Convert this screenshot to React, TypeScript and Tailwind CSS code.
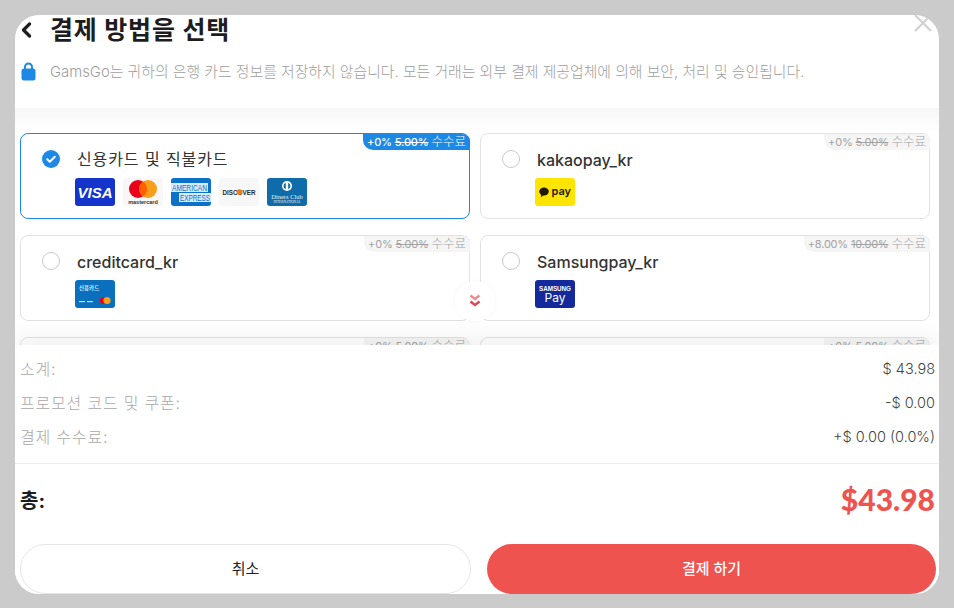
import { ReactNode } from 'react'

const FONT = "font-['Inter','Noto_Sans_CJK_KR',sans-serif]"

function Tile({ className, children }: { className: string; children: ReactNode }) {
  return <div className={`w-10 h-7 rounded-[3px] overflow-hidden shrink-0 ${className}`}>{children}</div>
}

function Visa() {
  return (
    <Tile className="bg-[#1434cb] flex items-center justify-center">
      <span className="text-white text-[15px] leading-none font-black italic font-['Liberation_Sans',sans-serif]">VISA</span>
    </Tile>
  )
}

function Mastercard() {
  return (
    <Tile className="bg-[#f7f7f7]">
      <svg width="40" height="28" viewBox="0 0 40 28">
        <circle cx="15" cy="11" r="9" fill="#eb001b" />
        <circle cx="25" cy="11" r="9" fill="#f79e1b" />
        <path d="M20 3.5a9 9 0 0 1 0 15a9 9 0 0 1 0-15z" fill="#ff5f00" />
        <text x="20" y="25.5" textAnchor="middle" fontSize="5.5" fontWeight="700" fill="#333" fontFamily="Liberation Sans">mastercard</text>
      </svg>
    </Tile>
  )
}

function Amex() {
  return (
    <Tile className="bg-[#0b72c8]">
      <svg width="40" height="28" viewBox="0 0 40 28">
        <rect x="0" y="5" width="37" height="9" fill="#d8eafa" />
        <rect x="8" y="15" width="32" height="9" fill="#d8eafa" />
        <text x="1" y="12.5" fontSize="8.5" textLength="35" lengthAdjust="spacingAndGlyphs" fill="#0b72c8" fontFamily="Liberation Sans">AMERICAN</text>
        <text x="9" y="22.5" fontSize="8.5" textLength="30" lengthAdjust="spacingAndGlyphs" fill="#0b72c8" fontFamily="Liberation Sans">EXPRESS</text>
      </svg>
    </Tile>
  )
}

function Discover() {
  return (
    <Tile className="bg-[#f7f7f7]">
      <svg width="40" height="28" viewBox="0 0 40 28">
        <text x="3.5" y="16.5" fontSize="7.5" fontWeight="700" textLength="33" lengthAdjust="spacingAndGlyphs" fill="#2b2b2b" fontFamily="Liberation Sans">DISCOVER</text>
        <circle cx="20.5" cy="14" r="2.8" fill="#f27a1a" />
      </svg>
    </Tile>
  )
}

function Diners() {
  return (
    <Tile className="bg-[#0f6ca8]">
      <svg width="40" height="28" viewBox="0 0 40 28">
        <circle cx="20" cy="8" r="5" fill="#fff" />
        <path d="M18.8 4.8a3.4 3.4 0 0 0 0 6.4zM21.2 4.8a3.4 3.4 0 0 1 0 6.4z" fill="#0f6ca8" />
        <text x="20" y="20.5" textAnchor="middle" fontSize="6.5" fill="#e4f0f8" fontFamily="Liberation Serif">Diners Club</text>
        <text x="20" y="25" textAnchor="middle" fontSize="3.4" fill="#e4f0f8" fontFamily="Liberation Serif">INTERNATIONAL</text>
      </svg>
    </Tile>
  )
}

function KakaoPay() {
  return (
    <Tile className="bg-[#fee500]">
      <svg width="40" height="28" viewBox="0 0 40 28">
        <ellipse cx="9" cy="13.5" rx="4.8" ry="4" fill="#1e1a00" />
        <path d="M6.5 16l-.8 3.2 3.2-2.2z" fill="#1e1a00" />
        <text x="16.5" y="16.5" fontSize="11" fontWeight="600" fill="#1e1a00" fontFamily="Inter">pay</text>
      </svg>
    </Tile>
  )
}

function LocalCard() {
  return (
    <Tile className="bg-[#0a70bd]">
      <svg width="40" height="28" viewBox="0 0 40 28">
        <text x="4" y="9.5" fontSize="5.5" fontWeight="700" fill="#cfe6f7" fontFamily="Noto Sans CJK KR">신용카드</text>
        <rect x="4" y="21" width="6" height="1.2" fill="#bcdcf3" />
        <rect x="12" y="21" width="6" height="1.2" fill="#bcdcf3" />
        <circle cx="28.5" cy="20.5" r="3.6" fill="#eb001b" />
        <circle cx="32" cy="20.5" r="3.6" fill="#f79e1b" />
      </svg>
    </Tile>
  )
}

function SamsungPay() {
  return (
    <Tile className="bg-[#14299b]">
      <svg width="40" height="28" viewBox="0 0 40 28">
        <text x="4" y="11" fontSize="7.5" fontWeight="700" textLength="32" lengthAdjust="spacingAndGlyphs" fill="#fff" fontFamily="Liberation Sans">SAMSUNG</text>
        <text x="20" y="22" textAnchor="middle" fontSize="12" fill="#fff" fontFamily="Inter">Pay</text>
      </svg>
    </Tile>
  )
}

function Badge({ rate, was, active }: { rate: string; was: string; active?: boolean }) {
  return (
    <div className={`absolute top-0 -right-px h-4 pl-1 pr-1 flex items-center gap-[3px] rounded-tr-[8px] rounded-bl-[10px] text-[11px] tracking-[-0.2px] leading-none whitespace-nowrap ${active ? 'bg-[#1e88e5] text-white font-medium' : 'bg-[#f5f5f5] text-[#a3a3a3]'}`}>
      <span>{rate}</span>
      <span className="line-through">{was}</span>
      <span className="text-[12.5px] tracking-normal font-light">수수료</span>
    </div>
  )
}

function Card({ name, badge, children, active }: { name: string; badge: [string, string]; children: ReactNode; active?: boolean }) {
  return (
    <div className={`relative h-[86px] rounded-[8px] border pl-[21px] pt-3 ${active ? 'border-[#1e88e5]' : 'border-[#e2e2e2]'}`}>
      <Badge rate={badge[0]} was={badge[1]} active={active} />
      <div className="flex items-center gap-[9px] h-[26px]">
        {active ? (
          <svg width="18" height="18" viewBox="0 0 18 18" className="shrink-0">
            <circle cx="9" cy="9" r="9" fill="#1e88e5" />
            <path d="M5.2 9.2l2.6 2.6 5-5" fill="none" stroke="#fff" strokeWidth="2" strokeLinecap="round" strokeLinejoin="round" />
          </svg>
        ) : (
          <div className="w-[18px] h-[18px] rounded-full border border-[#c9c9c9] shrink-0" />
        )}
        <span className={`ml-[8px] text-[16px] text-[#333] ${active ? 'font-normal tracking-[0.9px]' : 'font-medium pt-px'}`}>{name}</span>
      </div>
      <div className="flex gap-2 ml-[33px] mt-[6px]">{children}</div>
    </div>
  )
}

function SummaryRow({ label, value }: { label: string; value: string }) {
  return (
    <div className="flex justify-between items-center h-[34px] font-light">
      <span className="text-[16px] tracking-[0.8px] text-[#a8a8a8]">{label}</span>
      <span className="text-[14.5px] text-[#444]">{value}</span>
    </div>
  )
}

export default function App() {
  return (
    <div className={`h-[608px] w-[954px] overflow-hidden bg-[#cbcbcb] pt-[15px] pl-[15px] ${FONT}`}>
      <div className="relative w-[924px] h-[579px] bg-white rounded-[24px] overflow-hidden flex flex-col">
        {/* Header */}
        <div className="h-[93px] shrink-0 pl-[6px] relative">
          <div className="flex items-center h-[28px] mt-px">
            <svg width="11" height="16" viewBox="0 0 11 16" className="shrink-0">
              <path d="M8.5 2L2.5 8l6 6" fill="none" stroke="#1d1d1d" strokeWidth="3.2" strokeLinecap="round" strokeLinejoin="round" />
            </svg>
            <h1 className="ml-[18px] text-[25px] leading-7 font-bold text-[#1d1d1d] tracking-[0.8px]">결제 방법을 선택</h1>
          </div>
          <div className="flex items-center mt-[17px] h-5">
            <svg width="15" height="19" viewBox="0 0 15 19" className="shrink-0">
              <path d="M4 8V5a3.5 3.5 0 0 1 7 0v3" fill="none" stroke="#1e88e5" strokeWidth="2" />
              <rect x="0.5" y="6.5" width="14" height="12" rx="2.5" fill="#1e88e5" />
            </svg>
            <p className="ml-[14px] mt-[2px] text-[14.86px] text-[#9e9e9e] font-light whitespace-nowrap">
              GamsGo는 귀하의 은행 카드 정보를 저장하지 않습니다. 모든 거래는 외부 결제 제공업체에 의해 보안, 처리 및 승인됩니다.
            </p>
          </div>
          <svg width="18" height="18" viewBox="0 0 18 18" className="absolute right-[7px] -top-[1px]">
            <path d="M1 1l16 16M17 1L1 17" stroke="#cfcfcf" strokeWidth="2" />
          </svg>
        </div>

        {/* Methods */}
        <div className="relative h-[237px] shrink-0 overflow-hidden bg-gradient-to-b from-[#f7f7f7] to-white to-[25px] pl-[5px] pr-[9px] pt-[25px]">
          <div className="grid grid-cols-2 gap-x-[10px] gap-y-4">
            <Card name="신용카드 및 직불카드" badge={['+0%', '5.00%']} active>
              <Visa />
              <Mastercard />
              <Amex />
              <Discover />
              <Diners />
            </Card>
            <Card name="kakaopay_kr" badge={['+0%', '5.00%']}>
              <KakaoPay />
            </Card>
            <Card name="creditcard_kr" badge={['+0%', '5.00%']}>
              <LocalCard />
            </Card>
            <Card name="Samsungpay_kr" badge={['+8.00%', '10.00%']}>
              <SamsungPay />
            </Card>
            <Card name="" badge={['+0%', '5.00%']}>
              <span />
            </Card>
            <Card name="" badge={['+0%', '5.00%']}>
              <span />
            </Card>
          </div>
          <div className="absolute left-[440px] top-[173px] w-10 h-10 rounded-full bg-white shadow-[0_0_6px_rgba(0,0,0,0.03)] flex items-center justify-center">
            <svg width="12" height="14" viewBox="0 0 12 14">
              <path d="M1.5 1.5L6 5l4.5-3.5" fill="none" stroke="#f08a8f" strokeWidth="2.4" />
              <path d="M1.5 7.5L6 11l4.5-3.5" fill="none" stroke="#e0454f" strokeWidth="2.4" />
            </svg>
          </div>
        </div>

        {/* Summary */}
        <div className="relative flex-1 bg-white flex flex-col shadow-[0_-10px_20px_rgba(0,0,0,0.05)]">
          <div className="pl-[5px] pr-1 pt-[7px] h-[119px] shrink-0 border-b border-[#ededed]">
            <SummaryRow label="소계:" value="$ 43.98" />
            <SummaryRow label="프로모션 코드 및 쿠폰:" value="-$ 0.00" />
            <SummaryRow label="결제 수수료:" value="+$ 0.00 (0.0%)" />
          </div>
          <div className="flex justify-between items-center pl-[5px] pr-1 h-[73px] shrink-0">
            <span className="text-[20px] font-bold text-[#1d1d1d]">총:</span>
            <span className="text-[30px] font-black text-[#ef5350] font-['Lato',sans-serif] mb-0.5">$43.98</span>
          </div>
          <div className="flex gap-4 pl-[5px] pr-[3px] mt-[7px]">
            <button className="flex-1 h-[50px] rounded-full border border-[#e5e5e5] bg-white text-[15px] font-normal text-[#222]">취소</button>
            <button className="flex-1 h-[50px] rounded-full bg-[#ef5350] text-[15px] font-medium text-white">결제 하기</button>
          </div>
        </div>
      </div>
    </div>
  )
}
